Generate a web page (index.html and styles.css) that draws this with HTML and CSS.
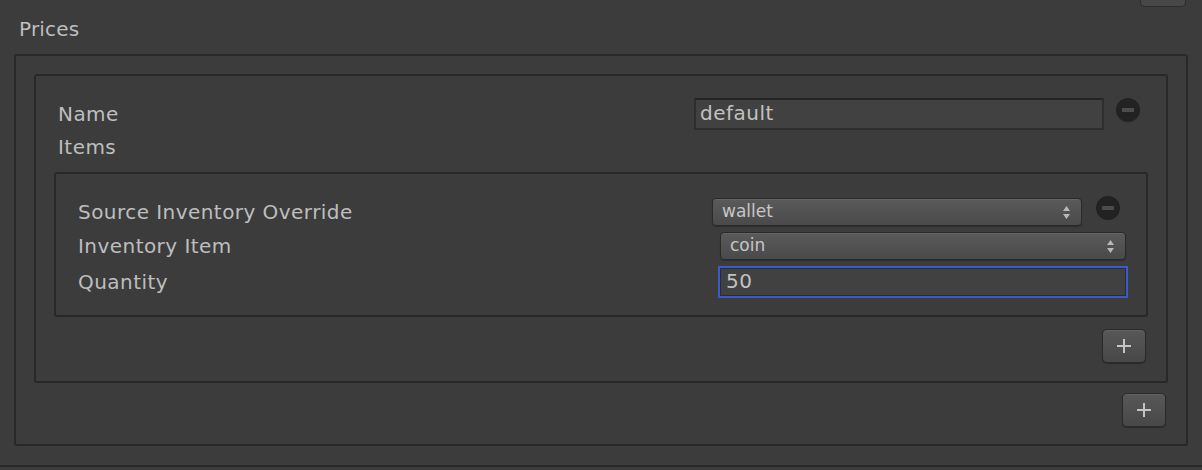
FILE: index.html
```html
<!DOCTYPE html>
<html>
<head>
<meta charset="utf-8">
<link rel="stylesheet" href="styles.css">
</head>
<body>
<div class="top-stub"><div class="stub-btn"></div></div>
<div class="section-title">Prices</div>
<div class="outer">
  <div class="card">
    <div class="row row-name">
      <div class="label">Name</div>
      <div class="field field-name">default</div>
      <div class="minus"></div>
    </div>
    <div class="row row-items">
      <div class="label">Items</div>
    </div>
    <div class="nested">
      <div class="row row-src">
        <div class="label">Source Inventory Override</div>
        <div class="popup popup-wallet"><span>wallet</span><svg class="arrows" width="7" height="13" viewBox="0 0 7 13"><path d="M3.5 0 L7 5 L0 5 Z M0 8 L7 8 L3.5 13 Z" fill="#b8b8b8"/></svg></div>
        <div class="minus"></div>
      </div>
      <div class="row row-item">
        <div class="label">Inventory Item</div>
        <div class="popup popup-coin"><span>coin</span><svg class="arrows" width="7" height="13" viewBox="0 0 7 13"><path d="M3.5 0 L7 5 L0 5 Z M0 8 L7 8 L3.5 13 Z" fill="#b8b8b8"/></svg></div>
      </div>
      <div class="row row-qty">
        <div class="label">Quantity</div>
        <div class="field field-qty">50</div>
      </div>
    </div>
    <div class="btn-row btn-row-inner">
      <div class="plus-btn"><svg width="14" height="14" viewBox="0 0 14 14"><path d="M7 0 V14 M0 7 H14" stroke="#c4c4c4" stroke-width="2"/></svg></div>
    </div>
  </div>
  <div class="btn-row btn-row-outer">
    <div class="plus-btn"><svg width="14" height="14" viewBox="0 0 14 14"><path d="M7 0 V14 M0 7 H14" stroke="#c4c4c4" stroke-width="2"/></svg></div>
  </div>
</div>
<div class="bottom-line"></div>
</body>
</html>
```

FILE: styles.css
```css
html, body {
  margin: 0;
  padding: 0;
  background: #3c3c3c;
  font-family: "DejaVu Sans", "Noto Sans", sans-serif;
  color: #bebebe;
  overflow: hidden;
}

.top-stub {
  height: 7px;
  display: flex;
  justify-content: flex-end;
  padding-right: 16px;
}

.stub-btn {
  width: 44px;
  height: 6px;
  background: #484848;
  border: 1px solid #2c2c2c;
  border-top: none;
  border-radius: 0 0 5px 5px;
}

.section-title {
  font-size: 20px;
  line-height: 24px;
  margin-top: 10px;
  margin-bottom: 13px;
  padding-left: 19px;
  letter-spacing: 0.2px;
}

.outer {
  margin: 0 14px;
  border: 2px solid #282828;
  border-radius: 3px;
  padding: 18px 18px 17px 18px;
}

.card {
  border: 2px solid #282828;
  border-radius: 3px;
  padding: 22px 0 18px 0;
}

.row {
  display: flex;
  align-items: center;
}

.label {
  flex: 1;
  font-size: 20px;
  line-height: 24px;
  white-space: nowrap;
  letter-spacing: 0.45px;
}

.row-name {
  height: 32px;
  padding-left: 22px;
  padding-right: 26px;
}

.row-items {
  height: 34px;
  padding-left: 22px;
}

.field {
  box-sizing: border-box;
  background: #414141;
  border: 2px solid #2e2e2e;
  border-top-color: #242424;
  font-size: 20px;
  line-height: 26px;
  padding-left: 4px;
  color: #c2c2c2;
  letter-spacing: 0.5px;
}

.field-name {
  width: 410px;
  height: 32px;
}

.minus {
  width: 24px;
  height: 24px;
  border-radius: 50%;
  background: #222222;
  position: relative;
  flex: none;
}

.minus::after {
  content: "";
  position: absolute;
  left: 6px;
  top: 10px;
  width: 12px;
  height: 4px;
  background: #4c4c4c;
}

.row-name .minus {
  margin-left: 12px;
  margin-top: -8px;
}

.nested {
  margin: 8px 18px 0 18px;
  border: 2px solid #282828;
  border-radius: 3px;
  padding: 24px 0 17px 22px;
}

.popup {
  box-sizing: border-box;
  height: 28px;
  display: flex;
  align-items: center;
  justify-content: space-between;
  padding: 0 11px 0 9px;
  background: linear-gradient(#5a5a5a, #4a4a4a);
  border: 1px solid #2a2a2a;
  border-radius: 4px;
  box-shadow: inset 0 1px 0 rgba(255, 255, 255, 0.07), 0 1px 1px rgba(0, 0, 0, 0.25);
  font-size: 17px;
  color: #c6c6c6;
}

.popup span {
  line-height: 20px;
  margin-top: -2px;
}

.arrows {
  flex: none;
}

.row-src {
  height: 28px;
  padding-right: 26px;
}

.popup-wallet {
  width: 370px;
}

.row-src .minus {
  margin-left: 14px;
  margin-top: -8px;
}

.row-item {
  height: 28px;
  margin-top: 6px;
  padding-right: 20px;
}

.popup-coin {
  width: 406px;
}

.row-qty {
  height: 32px;
  margin-top: 6px;
  padding-right: 18px;
}

.field-qty {
  width: 410px;
  height: 32px;
  border: 2px solid #3a5bd0;
  box-shadow: inset 0 0 0 1px #2c2c2c;
  padding-left: 6px;
}

.btn-row {
  display: flex;
  justify-content: flex-end;
}

.btn-row-inner {
  margin-top: 12px;
  padding-right: 20px;
}

.btn-row-outer {
  margin-top: 10px;
  padding-right: 2px;
}

.plus-btn {
  box-sizing: border-box;
  width: 44px;
  height: 34px;
  display: flex;
  align-items: center;
  justify-content: center;
  background: linear-gradient(#585858, #484848);
  border: 1px solid #2a2a2a;
  border-radius: 5px;
  box-shadow: inset 0 1px 0 rgba(255, 255, 255, 0.07), 0 1px 1px rgba(0, 0, 0, 0.3);
}

.bottom-line {
  margin-top: 19px;
  height: 2px;
  background: #282828;
}
```
